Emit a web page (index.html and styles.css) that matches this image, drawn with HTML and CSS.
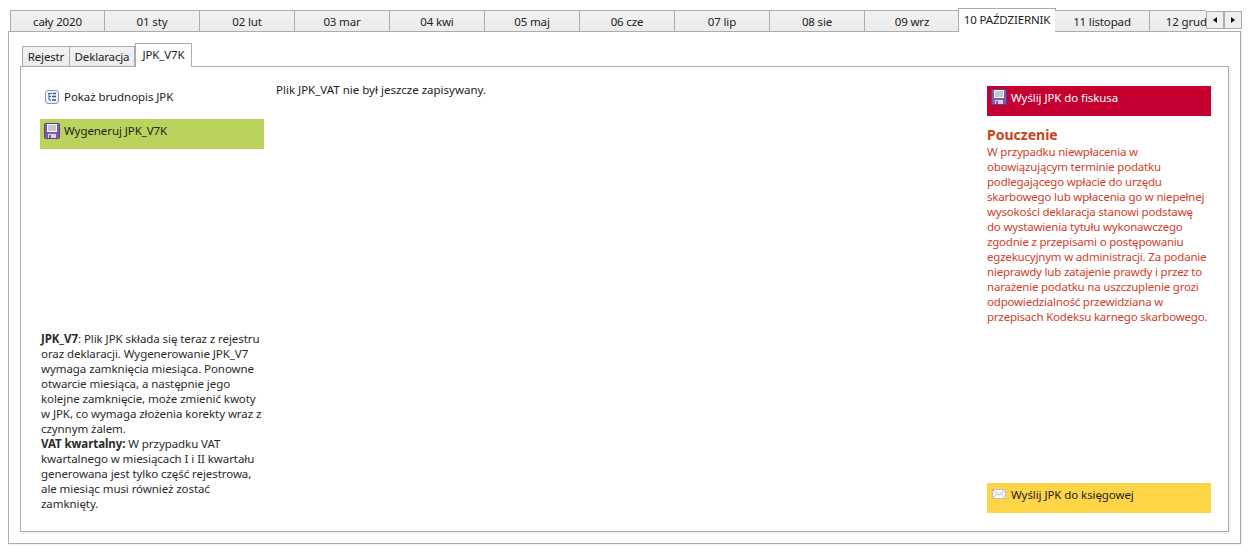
FILE: index.html
```html
<!DOCTYPE html>
<html lang="pl">
<head>
<meta charset="utf-8">
<title>JPK_V7K</title>
<link rel="stylesheet" href="styles.css">
</head>
<body>
<svg class="defs" width="0" height="0" aria-hidden="true">
  <symbol id="floppy" viewBox="0 0 16 16">
    <path d="M.5 1.5a1 1 0 0 1 1-1h13a1 1 0 0 1 1 1v13a1 1 0 0 1-1 1h-13a1 1 0 0 1-1-1z" fill="#7d5aa6" stroke="#5f3f8c"/>
    <rect x="3" y="1" width="10" height="8" fill="#f4f4f8"/>
    <path d="M4 3h8M4 5h8M4 7h8" stroke="#9a9ab0"/>
    <rect x="4" y="11" width="8" height="4" fill="#d8d4e4"/>
    <rect x="5" y="12" width="2" height="3" fill="#7d5aa6"/>
  </symbol>
</svg>
<div class="window">
  <div class="month-strip">
    <div class="month-tabs">
      <div class="mtab">cały 2020</div>
      <div class="mtab">01 sty</div>
      <div class="mtab">02 lut</div>
      <div class="mtab">03 mar</div>
      <div class="mtab">04 kwi</div>
      <div class="mtab">05 maj</div>
      <div class="mtab">06 cze</div>
      <div class="mtab">07 lip</div>
      <div class="mtab">08 sie</div>
      <div class="mtab">09 wrz</div>
      <div class="mtab active">10 PAŹDZIERNIK</div>
      <div class="mtab">11 listopad</div>
      <div class="mtab">12 grudzień</div>
    </div>
    <div class="scroller">
      <div class="scroll-btn"><span class="arrow left"></span></div>
      <div class="scroll-btn"><span class="arrow right"></span></div>
    </div>
  </div>
  <div class="outer-frame">
    <div class="sub-tabs">
      <div class="stab rejestr">Rejestr</div>
      <div class="stab deklaracja">Deklaracja</div>
      <div class="stab active">JPK_V7K</div>
    </div>
    <div class="inner-frame">
      <div class="col side">
        <div class="actions">
          <div class="action plain">
            <svg class="icon" viewBox="0 0 16 16">
              <rect x="1.500" y="1.500" width="13" height="13" rx="2.500" fill="#eef3fb" stroke="#7f9cc8"/>
              <path d="M4 4.500h4M5 4.500v6.500h2M5 7.500h2" fill="none" stroke="#2b63ae"/>
              <path d="M8 7.500h4M8 11h4M9 4.500h3" stroke="#55575c" stroke-width="1.500"/>
            </svg>
            <span>Pokaż brudnopis JPK</span>
          </div>
          <div class="action green">
            <svg class="icon"><use href="#floppy"/></svg>
            <span>Wygeneruj JPK_V7K</span>
          </div>
        </div>
        <p class="note"><b>JPK_V7</b>: Plik JPK składa się teraz z rejestru<br>oraz deklaracji. Wygenerowanie JPK_V7<br>wymaga zamknięcia miesiąca. Ponowne<br>otwarcie miesiąca, a następnie jego<br>kolejne zamknięcie, może zmienić kwoty<br>w JPK, co wymaga złożenia korekty wraz z<br>czynnym żalem.<br><b>VAT kwartalny:</b> W przypadku VAT<br>kwartalnego w miesiącach I i II kwartału<br>generowana jest tylko część rejestrowa,<br>ale miesiąc musi również zostać<br>zamknięty.</p>
      </div>
      <div class="col middle">Plik JPK_VAT nie był jeszcze zapisywany.</div>
      <div class="col side">
        <div class="top-block">
          <div class="action red">
            <svg class="icon"><use href="#floppy"/></svg>
            <span>Wyślij JPK do fiskusa</span>
          </div>
          <h2 class="warn-title">Pouczenie</h2>
          <p class="warn">W przypadku niewpłacenia w<br>obowiązującym terminie podatku<br>podlegającego wpłacie do urzędu<br>skarbowego lub wpłacenia go w niepełnej<br>wysokości deklaracja stanowi podstawę<br>do wystawienia tytułu wykonawczego<br>zgodnie z przepisami o postępowaniu<br>egzekucyjnym w administracji. Za podanie<br>nieprawdy lub zatajenie prawdy i przez to<br>narażenie podatku na uszczuplenie grozi<br>odpowiedzialność przewidziana w<br>przepisach Kodeksu karnego skarbowego.</p>
        </div>
        <div class="action yellow">
          <svg class="icon" viewBox="0 0 16 16">
            <rect x="1.500" y="3.500" width="13" height="9" fill="#f6f6f6" stroke="#a9a9b4" stroke-dasharray="2 1"/>
            <path d="M2 4l6 5 6-5M2 12l4.500-4.500M14 12l-4.500-4.500" fill="none" stroke="#c4c4cc"/>
          </svg>
          <span>Wyślij JPK do księgowej</span>
        </div>
      </div>
    </div>
  </div>
</div>
</body>
</html>
```
FILE: styles.css
```css
* { box-sizing: border-box; }
html, body { margin: 0; height: 100%; background: #fff; }
body {
  font-family: "Noto Sans", "Open Sans", sans-serif;
  font-size: 11.500px;
  line-height: 15px;
  color: #222;
  overflow: hidden;
}
.defs { position: absolute; }
.window { width: 1251px; height: 553px; padding: 8px 10px 9px 8px; display: flex; flex-direction: column; }

.month-strip { position: relative; height: 23px; flex: none; }
.month-tabs { display: flex; align-items: flex-start; height: 24px; padding-left: 2px; overflow: hidden; width: 1198px; position: relative; z-index: 1; letter-spacing: -.15px; }
.mtab {
  flex: none; width: 95px; height: 21px; margin-top: 2px; text-align: center; line-height: 21px;
  background: linear-gradient(#f2f2f2, #ebebeb);
  border: 1px solid #acacac; border-left-width: 0; border-bottom: 0; white-space: nowrap; overflow: hidden;
}
.mtab:first-child { border-left-width: 1px; }
.mtab.active { height: 24px; width: 98px; margin: 0 -1px 0 -2px; border-left-width: 1px; background: #fff; line-height: 21px; padding-bottom: 3px; }
.scroller { position: absolute; left: 1198px; top: 3px; display: flex; z-index: 2; }
.scroll-btn { width: 18px; height: 18px; background: #f0f0f0; border: 1px solid #acacac; display: flex; align-items: center; justify-content: center; }
.arrow { width: 0; height: 0; border-top: 3.500px solid transparent; border-bottom: 3.500px solid transparent; }
.arrow.left { border-right: 4px solid #111; }
.arrow.right { border-left: 4px solid #111; }

.outer-frame {
  flex: 1; width: 1233px; border: 1px solid #acacac; background: #fff; padding: 11px;
  display: flex; flex-direction: column; box-shadow: 1px 1px 0 #f0f0f0; min-height: 0;
}
.sub-tabs { display: flex; align-items: flex-start; height: 24px; padding-left: 2px; margin-bottom: -1px; position: relative; z-index: 1; flex: none; letter-spacing: -.15px; }
.stab { height: 20px; margin-top: 3px; line-height: 20px; text-align: center; white-space: nowrap; background: linear-gradient(#f2f2f2, #ebebeb); border: 1px solid #acacac; border-bottom: 0; }
.stab.rejestr { width: 48px; }
.stab.deklaracja { width: 65px; border-left-width: 0; }
.stab.active { height: 24px; margin-top: 0; width: 57px; background: #fff; line-height: 22px; padding-bottom: 2px; }
.inner-frame {
  flex: 1; border: 1px solid #acacac; padding: 16px 17px 18px 19px;
  display: grid; grid-template-columns: 224px 1fr 224px; column-gap: 12px; box-shadow: 2px 2px 0 #f2f2f2; min-height: 0;
}
.col { display: flex; flex-direction: column; min-height: 0; white-space: nowrap; }
.side { justify-content: space-between; }
.middle { margin-top: -1px; }
.actions { display: flex; flex-direction: column; gap: 6px; }
.action { height: 30px; display: flex; align-items: flex-start; gap: 4px; padding: 4px 4px 0; white-space: nowrap; letter-spacing: -.08px; }
.action span { line-height: 15px; }
.icon { width: 16px; height: 16px; flex: none; }
.plain { padding-top: 6px; }
.green { background: #b9d35c; }
.red { background: #c40030; color: #fff; margin-top: 3px; padding-top: 3px; }
.red span { margin-top: 1px; }
.yellow { background: #ffd548; }
.yellow .icon { margin-top: -1px; }
.note { margin: 0 0 2px 1px; color: #2a2a2a; letter-spacing: -.07px; }
.warn-title { margin: 9px 0 0; font-size: 14px; line-height: 19px; font-weight: 700; color: #c8431a; }
.warn { margin: 0; color: #d2402a; letter-spacing: -.2px; }
```
